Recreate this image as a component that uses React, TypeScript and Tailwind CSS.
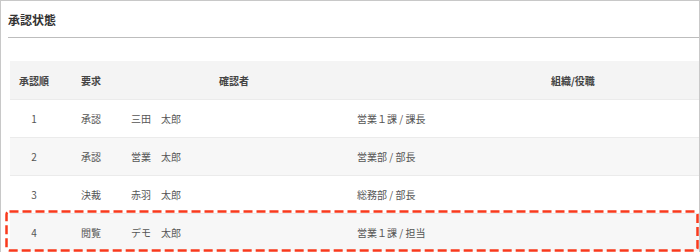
import React from 'react';

interface Approver {
  order: number;
  request: string;
  name: string;
  org: string;
}

const approvers: Approver[] = [
  { order: 1, request: '承認', name: '三田　太郎', org: '営業１課 / 課長' },
  { order: 2, request: '承認', name: '営業　太郎', org: '営業部 / 部長' },
  { order: 3, request: '決裁', name: '赤羽　太郎', org: '総務部 / 部長' },
  { order: 4, request: '閲覧', name: 'デモ　太郎', org: '営業１課 / 担当' },
];

const cols = 'grid grid-cols-[48px_73px_226px_1fr] items-center';

const App: React.FC = () => {
  return (
    <div
      className="relative w-[700px] h-[252px] overflow-hidden bg-white border-l border-r border-t border-[#c8c8c8] text-[#555]"
      style={{ fontFamily: '"Noto Sans CJK JP", "Noto Sans", sans-serif' }}
    >
      <div className="ml-[7px] h-[37px] flex items-center border-b border-[#bdbdbd]">
        <h2 className="text-[12px] font-bold text-[#333] leading-none pt-[1px]">承認状態</h2>
      </div>

      <div className="ml-[9px] mt-[23px] text-[10px]">
        <div className={`${cols} h-[38px] bg-[#f4f4f4] font-bold text-[#444]`}>
          <span className="text-center">承認順</span>
          <span className="pl-[23px]">要求</span>
          <span className="pl-[88px]">確認者</span>
          <span className="pl-[194px]">組織/役職</span>
        </div>
        {approvers.map((a, idx) => (
          <div
            key={a.order}
            className={`${cols} h-[38px] border-t border-[#ebebeb] ${idx % 2 === 1 ? 'bg-[#f7f7f7]' : 'bg-white'}`}
          >
            <span className="text-center">{a.order}</span>
            <span className="pl-[23px]">{a.request}</span>
            <span>{a.name}</span>
            <span>{a.org}</span>
          </div>
        ))}
      </div>

      {/* highlight around the last row */}
      <svg className="absolute left-[4px] top-[209px]" width="694" height="42">
        <rect
          x="1.5"
          y="1.5"
          width="691"
          height="39"
          rx="3"
          fill="none"
          stroke="#f93a1d"
          strokeWidth="2.5"
          strokeDasharray="9 4"
        />
      </svg>
    </div>
  );
};

export default App;
